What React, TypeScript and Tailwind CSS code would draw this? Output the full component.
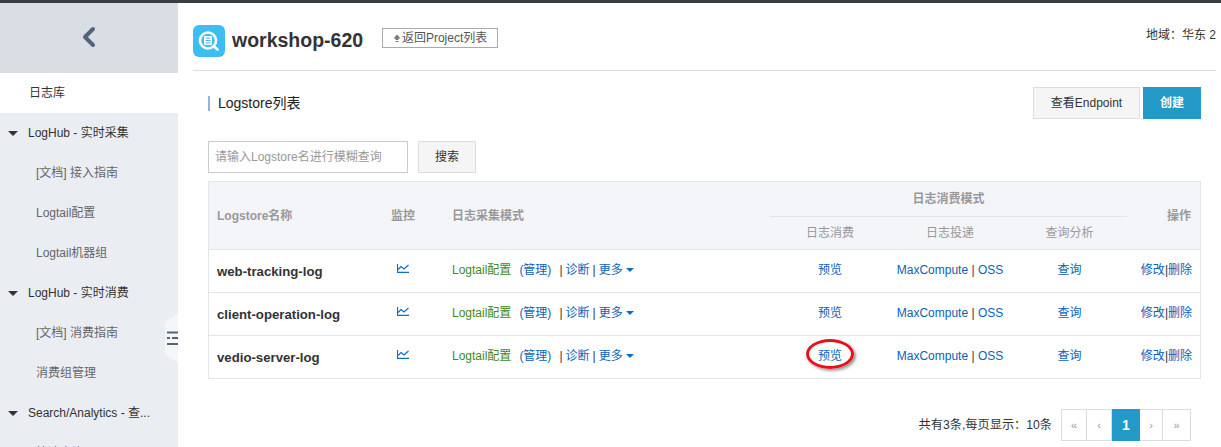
import React from "react"
import { ChevronLeft } from "lucide-react"

const FONT = "font-['Liberation_Sans','Noto_Sans_CJK_SC',sans-serif]"
const LINK = "text-[#0a62b8]"
const ROW_BORDER = "border-b border-[#e1e6eb]"

const stores = ["web-tracking-log", "client-operation-log", "vedio-server-log"]

function NavGroup({ label }: { label: string }) {
  return (
    <div className="h-10 flex items-center text-[12px] text-[#333] whitespace-nowrap">
      <span className="ml-[8px] mr-[10px] w-0 h-0 border-x-[5px] border-x-transparent border-t-[5px] border-t-[#333]" />
      {label}
    </div>
  )
}

function NavItem({ label }: { label: string }) {
  return <div className="h-10 flex items-center pl-[36px] text-[12px] text-[#666] whitespace-nowrap">{label}</div>
}

function Sidebar() {
  return (
    <aside className="relative w-[178px] shrink-0 bg-[#eaedf1] overflow-hidden">
      <div className="h-[70px] pb-[3px] bg-[#d9dee4] flex items-center justify-center">
        <ChevronLeft size={32} strokeWidth={3} className="text-[#546478]" />
      </div>
      <div className="h-10 bg-white flex items-center pl-[29px] text-[12px] text-[#333]">日志库</div>
      <NavGroup label="LogHub - 实时采集" />
      <NavItem label="[文档] 接入指南" />
      <NavItem label="Logtail配置" />
      <NavItem label="Logtail机器组" />
      <NavGroup label="LogHub - 实时消费" />
      <NavItem label="[文档] 消费指南" />
      <NavItem label="消费组管理" />
      <NavGroup label="Search/Analytics - 查..." />
      <NavItem label="快速查询" />
      <svg width="13" height="50" viewBox="0 0 13 50" className="absolute right-0 top-[310px]">
        <path d="M13 0 L0 9 V41 L13 50 Z" fill="#f4f6f8" />
        <path d="M2 19.5 H13 M2 25 H5 M7 25 H13 M2 31 H13" stroke="#546478" strokeWidth="2" fill="none" />
      </svg>
    </aside>
  )
}

function ProjectLogo() {
  return (
    <svg width="32" height="32" viewBox="0 0 32 32" className="shrink-0">
      <rect width="32" height="32" rx="6" fill="#3dbdf0" />
      <circle cx="15" cy="15.5" r="8" fill="none" stroke="#fff" strokeWidth="2.6" />
      <path d="M21 21.5 L24.5 24.5" stroke="#fff" strokeWidth="2.6" strokeLinecap="round" />
      <rect x="11" y="11" width="8" height="9" rx="1" fill="#fff" />
      <path d="M12.5 13 H17.5 M12.5 15.5 H17.5 M12.5 18 H17.5" stroke="#3dbdf0" strokeWidth="1" />
    </svg>
  )
}

function BackArrow() {
  return (
    <svg width="8" height="9" viewBox="0 0 8 9" className="mr-[1px] shrink-0">
      <path d="M4 0.5 L7.5 4.5 H5.5 V6 H2.5 V4.5 H0.5 Z" fill="#777" />
      <path d="M2.5 7.5 H5.5" stroke="#777" strokeWidth="1" />
    </svg>
  )
}

function ChartIcon() {
  return (
    <svg width="12" height="9" viewBox="0 0 12 9" className="inline-block">
      <path d="M0.5 0 V8.4 H12" fill="none" stroke="#0a6fc4" strokeWidth="1.1" />
      <path d="M1 5.5 L4 2.5 L7 5 L11.5 1" fill="none" stroke="#0a6fc4" strokeWidth="1.2" />
    </svg>
  )
}

function StoreRow({ name, marked, last }: { name: string; marked: boolean; last: boolean }) {
  const border = last ? "" : ROW_BORDER
  return (
    <tr className={last ? "h-[42px]" : "h-[43px]"}>
      <td className={`${border} pl-[8px] pt-[1px] text-[13.2px] font-bold text-[#333]`}>{name}</td>
      <td className={`${border} text-center pb-[6px]`}><ChartIcon /></td>
      <td className={`${border} pl-[19px] pb-[3px] whitespace-nowrap`}>
        <span className="text-[#3f8a1e]">Logtail配置</span>
        <span className={`${LINK} ml-[8px]`}>(管理)</span>
        <span className="text-[#333] ml-[8px]">|</span>
        <span className={`${LINK} ml-[3px]`}>诊断</span>
        <span className="text-[#333] mx-[3px]">|</span>
        <span className={LINK}>更多</span>
        <span className="inline-block ml-[3px] align-middle w-0 h-0 border-x-[4px] border-x-transparent border-t-[4px] border-t-[#0a6fc4]" />
      </td>
      <td className={`${border} text-center pb-[3px] relative`}>
        <span className={LINK}>预览</span>
        {marked && (
          <span className="absolute left-[36px] top-[3px] w-[48px] h-[30px] rounded-[50%] border-[3.5px] border-[#e8101a] shadow-[2px_2px_3px_rgba(0,0,0,0.4)]" />
        )}
      </td>
      <td className={`${border} text-center pb-[3px] whitespace-nowrap`}>
        <span className={LINK}>MaxCompute</span>
        <span className="text-[#333]"> | </span>
        <span className={LINK}>OSS</span>
      </td>
      <td className={`${border} text-center pl-[2px] pb-[3px]`}><span className={LINK}>查询</span></td>
      <td className={`${border} text-right pr-[8px] pb-[3px] whitespace-nowrap`}>
        <span className={LINK}>修改</span>
        <span className="text-[#333]">|</span>
        <span className={LINK}>删除</span>
      </td>
    </tr>
  )
}

function LogstoreTable() {
  const th = "font-bold text-[#999] text-[12px]"
  const subTh = "font-normal text-[#999] text-[12px] text-center border-t border-[#e1e6eb]"
  return (
    <table className="w-[993px] table-fixed border-separate border-spacing-0 border border-[#e1e6eb] text-[12px]">
      <colgroup>
        <col className="w-[164px]" />
        <col className="w-[60px]" />
        <col className="w-[337px]" />
        <col className="w-[120px]" />
        <col className="w-[120px]" />
        <col className="w-[117px]" />
        <col className="w-[73px]" />
      </colgroup>
      <thead className="bg-[#f4f5f9]">
        <tr className="h-[34px]">
          <th rowSpan={2} className={`${th} ${ROW_BORDER} text-left pl-[8px]`}>Logstore名称</th>
          <th rowSpan={2} className={`${th} ${ROW_BORDER} text-center`}>监控</th>
          <th rowSpan={2} className={`${th} ${ROW_BORDER} text-left pl-[19px]`}>日志采集模式</th>
          <th colSpan={3} className={`${th} text-center`}>日志消费模式</th>
          <th rowSpan={2} className={`${th} ${ROW_BORDER} text-right pr-[9px]`}>操作</th>
        </tr>
        <tr className="h-[34px]">
          <th className={`${subTh} ${ROW_BORDER}`}>日志消费</th>
          <th className={`${subTh} ${ROW_BORDER}`}>日志投递</th>
          <th className={`${subTh} ${ROW_BORDER} pl-[2px]`}>查询分析</th>
        </tr>
      </thead>
      <tbody>
        {stores.map((name, i) => (
          <StoreRow key={name} name={name} marked={i === 2} last={i === stores.length - 1} />
        ))}
      </tbody>
    </table>
  )
}

function Pagination() {
  const cell = "h-[32px] flex items-center justify-center text-[11px] text-[#999] border-y border-r border-[#ddd]"
  return (
    <div className="flex items-center justify-end mt-[30px] mr-[10px] text-[12px] text-[#333]">
      <span className="mr-[9px] text-[12.2px]">共有3条,每页显示：10条</span>
      <div className="flex">
        <span className={`${cell} w-[26px] border-l`}>«</span>
        <span className={`${cell} w-[25px]`}>‹</span>
        <span className="h-[32px] w-[28px] flex items-center justify-center bg-[#2399c8] text-white text-[14px] font-bold">1</span>
        <span className={`${cell} w-[23px]`}>›</span>
        <span className={`${cell} w-[28px]`}>»</span>
      </div>
    </div>
  )
}

export default function App() {
  return (
    <div className={`${FONT} w-[1221px] h-[447px] overflow-hidden bg-white flex flex-col`}>
      <div className="h-[3px] bg-[#373d41] shrink-0" />
      <div className="flex flex-1 min-h-0">
        <Sidebar />
        <main className="flex-1 pl-[15px] pr-[5px]">
          <header className="h-[68px] pt-[8px] flex items-center border-b border-[#ddd]">
            <ProjectLogo />
            <h1 className="ml-[7px] text-[19.5px] font-bold text-[#333] leading-none">workshop-620</h1>
            <button className="ml-[19px] mb-[5px] h-[20px] w-[116px] flex items-center justify-center border border-[#aaa] text-[12px] text-[#555]">
              <BackArrow />返回Project列表
            </button>
            <span className="ml-auto mb-[12px] text-[12px] text-[#333]">地域：华东 2</span>
          </header>
          <div className="pl-[15px] pr-[15px]">
            <div className="flex items-center justify-between mt-[16px] h-[32px]">
              <h2 className="border-l-2 border-[#88b7e0] pl-[8px] text-[14px] leading-[15px] text-[#222]">Logstore列表</h2>
              <div className="flex gap-[3px]">
                <button className="w-[107px] h-[32px] bg-[#f5f5f5] border border-[#ddd] text-[12px] text-[#333]">查看Endpoint</button>
                <button className="w-[58px] h-[32px] bg-[#2399c8] text-[12px] font-bold text-white">创建</button>
              </div>
            </div>
            <div className="flex gap-[10px] mt-[22px] mb-[8px]">
              <div className="w-[200px] h-[32px] border border-[#ccc] flex items-center pl-[6px] text-[12px] text-[#999]">请输入Logstore名进行模糊查询</div>
              <button className="w-[58px] h-[32px] bg-[#f5f5f5] border border-[#ddd] text-[12px] text-[#333]">搜索</button>
            </div>
            <LogstoreTable />
            <Pagination />
          </div>
        </main>
      </div>
    </div>
  )
}
